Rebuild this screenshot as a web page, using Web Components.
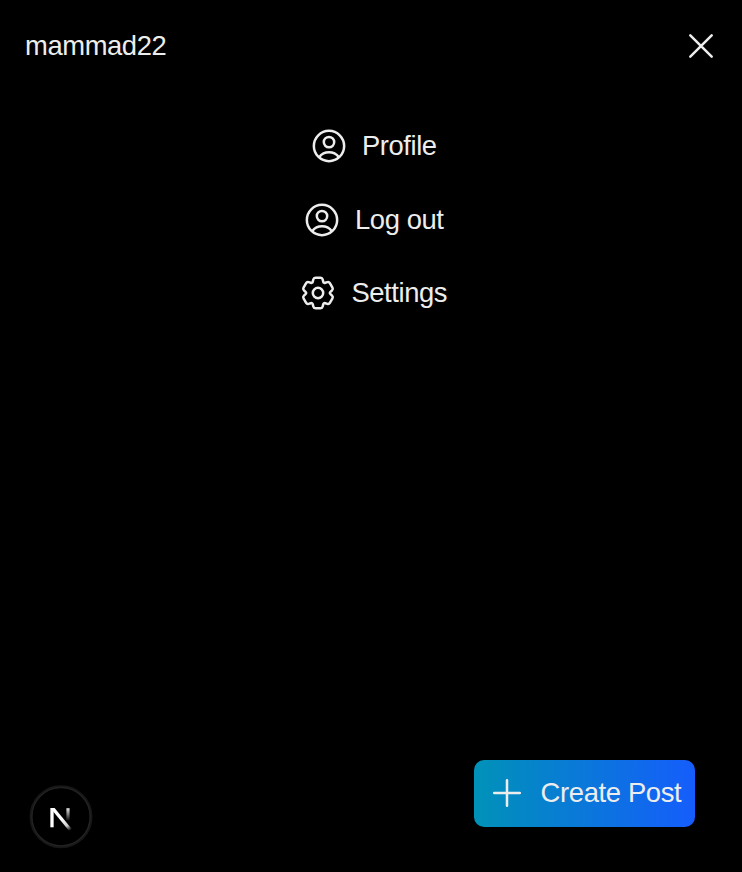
<!DOCTYPE html>
<html lang="en">
<head>
<meta charset="utf-8">
<title>Menu</title>
<style>
html,body{margin:0;height:100%;background:#000}
body{font-family:"Liberation Sans",Arial,sans-serif;font-size:27.4px;letter-spacing:-.41px;line-height:40px;color:#ededed;overflow:hidden}
</style>
</head>
<body>
<side-menu>
  <menu-header slot="header">mammad22</menu-header>
  <menu-item icon="user">Profile</menu-item>
  <menu-item icon="user">Log out</menu-item>
  <menu-item icon="gear">Settings</menu-item>
  <dev-badge slot="footer"></dev-badge>
  <create-button slot="footer">Create Post</create-button>
</side-menu>
<script>
const round = 'fill="none" stroke="currentColor" stroke-width="2.5" stroke-linecap="round" stroke-linejoin="round"';

// Six-toothed gear outline with softened corners, centred on the origin.
function gearPath() {
  const pts = [];
  for (let i = 0; i < 6; i++) {
    const a = i * Math.PI / 3, c = Math.cos(a), s = Math.sin(a);
    for (const [x, y] of [[-4.3, -15.2], [4.3, -15.2], [5.6, -9.7]])
      pts.push([x * c - y * s, x * s + y * c]);
  }
  const toward = (p, q, d) => {
    const l = Math.hypot(q[0] - p[0], q[1] - p[1]);
    return [p[0] + (q[0] - p[0]) * d / l, p[1] + (q[1] - p[1]) * d / l];
  };
  const f = p => p.map(v => v.toFixed(2)).join(' ');
  return pts.map((p, i) => {
    const a = toward(p, pts[(i + 17) % 18], 1.7), b = toward(p, pts[(i + 1) % 18], 1.7);
    return (i ? 'L' : 'M') + f(a) + 'Q' + f(p) + ' ' + f(b);
  }).join('') + 'Z';
}

const icons = {
  user: '<circle r="15.15"/><circle cy="-3.9" r="5.2"/><path d="M-9.7 10.9C-7.3 7.7-4 6.2 0 6.2S7.3 7.7 9.7 10.9"/>',
  gear: `<g transform="translate(-1 0)"><circle r="5.2"/><path d="${gearPath()}"/></g>`,
  close: '<path d="M-10.7-10.7 10.7 10.7M10.7-10.7-10.7 10.7"/>',
  plus: '<path d="M-12.8 0H12.8M0-12.8V12.8"/>'
};

class UiIcon extends HTMLElement {
  constructor() {
    super();
    this.attachShadow({mode: 'open'});
  }
  connectedCallback() {
    this.shadowRoot.innerHTML = `<style>:host{display:block;width:40px;height:40px;flex:none}svg{display:block}</style>
      <svg width="40" height="40" viewBox="-20 -20 40 40"><g ${round}>${icons[this.getAttribute('name')]}</g></svg>`;
  }
}
customElements.define('ui-icon', UiIcon);

customElements.define('side-menu', class extends HTMLElement {
  constructor() {
    super();
    this.attachShadow({mode: 'open'}).innerHTML = `<style>
      :host{display:flex;flex-direction:column;height:872px;box-sizing:border-box;background:#000}
      nav{display:flex;flex-direction:column;align-items:center;gap:33.6px;padding:60px 0 0 3.8px;flex:1}
      footer{display:flex;justify-content:space-between;align-items:flex-end;padding:0 47px 23px 29px}
      </style><slot name="header"></slot><nav><slot></slot></nav><footer><slot name="footer"></slot></footer>`;
  }
});

customElements.define('menu-header', class extends HTMLElement {
  constructor() {
    super();
    this.attachShadow({mode: 'open'}).innerHTML = `<style>
      :host{display:flex;justify-content:space-between;align-items:center;padding:26px 21px 0 25px}
      span{margin-top:-1px}
      </style><span><slot></slot></span><ui-icon name="close"></ui-icon>`;
  }
});

customElements.define('menu-item', class extends HTMLElement {
  constructor() {
    super();
    this.attachShadow({mode: 'open'}).innerHTML = `<style>
      :host{display:flex;align-items:center;gap:12.8px;height:40px}
      </style><ui-icon name="${this.getAttribute('icon')}"></ui-icon><span><slot></slot></span>`;
  }
});

customElements.define('create-button', class extends HTMLElement {
  constructor() {
    super();
    this.attachShadow({mode: 'open'}).innerHTML = `<style>
      :host{display:flex;margin-bottom:22px}
      button{display:flex;align-items:center;gap:13.6px;width:221px;height:67px;padding:0 13px 1px;border:0;border-radius:10px;
        font:inherit;letter-spacing:-.36px;color:inherit;white-space:nowrap;background:linear-gradient(to right,#0092b8,#155dfc)}
      </style><button><ui-icon name="plus"></ui-icon><span><slot></slot></span></button>`;
  }
});

customElements.define('dev-badge', class extends HTMLElement {
  constructor() {
    super();
    this.attachShadow({mode: 'open'}).innerHTML = `<style>:host{display:block;width:64px;height:64px}svg{display:block}</style>
      <svg width="64" height="64" viewBox="0 0 64 64" fill="none">
        <defs>
          <linearGradient id="a" gradientUnits="userSpaceOnUse" x1="34" y1="33" x2="42" y2="45"><stop stop-color="#fff"/><stop offset=".6" stop-color="#fff" stop-opacity=".8"/><stop offset="1" stop-color="#fff" stop-opacity="0"/></linearGradient>
          <linearGradient id="b" gradientUnits="userSpaceOnUse" x1="39" y1="22" x2="39" y2="36"><stop stop-color="#fff"/><stop offset="1" stop-color="#fff" stop-opacity="0"/></linearGradient>
          <clipPath id="c"><path d="M21 23H44V46H21Z"/></clipPath>
        </defs>
        <circle cx="32" cy="31.7" r="30" stroke="#171717" stroke-width="3"/>
        <circle cx="32" cy="31.7" r="29.2" stroke="#242424" stroke-width="1.2"/>
        <path d="M23 42.3V23.2" stroke="#fff" stroke-width="3.3"/>
        <path d="M39 23.2V36" stroke="url(#b)" stroke-width="3.2"/>
        <path d="M22.5 21.8 41.5 45" stroke="url(#a)" stroke-width="3.3" clip-path="url(#c)"/>
      </svg>`;
  }
});
</script>
</body>
</html>
